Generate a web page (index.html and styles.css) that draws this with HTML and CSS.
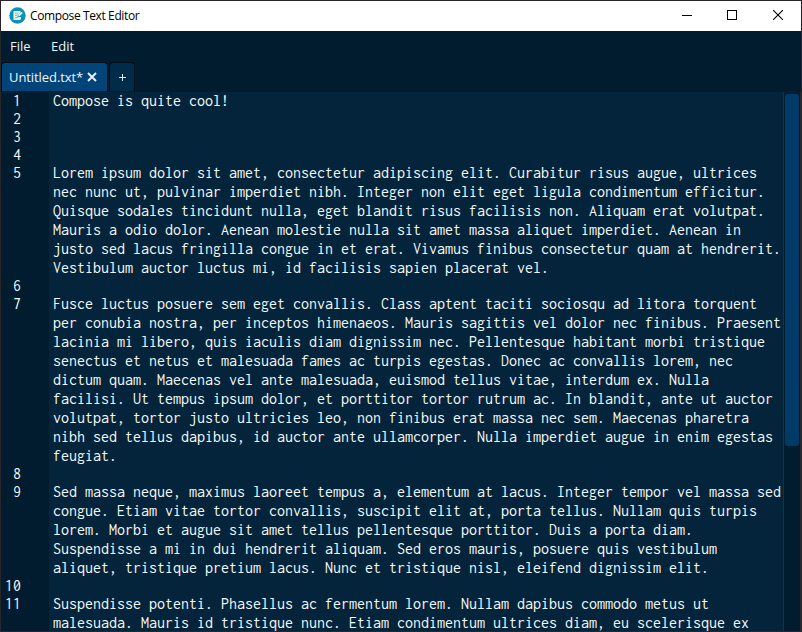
FILE: index.html
```html
<!DOCTYPE html>
<html lang="en">
<head>
<meta charset="utf-8">
<title>Compose Text Editor</title>
<link rel="stylesheet" href="styles.css">
</head>
<body>
<div class="window">
  <header class="titlebar">
    <svg class="logo" width="17" height="17" viewBox="0 0 17 17">
      <circle cx="8.5" cy="8.5" r="8.2" fill="#0991bd"/>
      <path d="M4.5 4h7v1.5L8.5 8.5V10H12v2l-1 1H4.5z" fill="#e9f7fb"/>
      <path d="M6 6.3h3M6 8.3h2M6 10.7h3.5" stroke="#0991bd" stroke-width=".6"/>
      <path d="M9.3 9.5l.3-1.7 3-3 1.2 1.2-3 3z" fill="#e9f7fb"/>
    </svg>
    <span class="title">Compose Text Editor</span>
    <div class="controls">
      <svg width="10" height="10"><path d="M0 5.5h10" stroke="#000"/></svg>
      <svg width="10" height="10"><rect x=".5" y=".5" width="9" height="9" fill="none" stroke="#000"/></svg>
      <svg width="10" height="10"><path d="M0 0l10 10M10 0L0 10" stroke="#000" stroke-width="1.1"/></svg>
    </div>
  </header>
  <nav class="menu"><span class="file">File</span><span class="edit">Edit</span></nav>
  <div class="tabs">
    <div class="tab active"><span class="name">Untitled.txt*</span>
      <svg width="10" height="10" viewBox="0 0 10 10"><path d="M1 1l8 8M9 1L1 9" stroke="#e8eff5" stroke-width="2"/></svg>
    </div>
    <div class="tab add"><svg width="7" height="7"><path d="M0 3.5h7M3.5 0v7" stroke="#dce5eb"/></svg></div>
  </div>
  <main class="editor">
    <div class="rows">
      <div class="row"><span class="num">1</span><pre>Compose is quite cool!</pre></div>
      <div class="row"><span class="num">2</span><pre></pre></div>
      <div class="row"><span class="num">3</span><pre></pre></div>
      <div class="row"><span class="num">4</span><pre></pre></div>
      <div class="row"><span class="num">5</span><pre>Lorem ipsum dolor sit amet, consectetur adipiscing elit. Curabitur risus augue, ultrices
nec nunc ut, pulvinar imperdiet nibh. Integer non elit eget ligula condimentum efficitur.
Quisque sodales tincidunt nulla, eget blandit risus facilisis non. Aliquam erat volutpat.
Mauris a odio dolor. Aenean molestie nulla sit amet massa aliquet imperdiet. Aenean in
justo sed lacus fringilla congue in et erat. Vivamus finibus consectetur quam at hendrerit.
Vestibulum auctor luctus mi, id facilisis sapien placerat vel.</pre></div>
      <div class="row"><span class="num">6</span><pre></pre></div>
      <div class="row"><span class="num">7</span><pre>Fusce luctus posuere sem eget convallis. Class aptent taciti sociosqu ad litora torquent
per conubia nostra, per inceptos himenaeos. Mauris sagittis vel dolor nec finibus. Praesent
lacinia mi libero, quis iaculis diam dignissim nec. Pellentesque habitant morbi tristique
senectus et netus et malesuada fames ac turpis egestas. Donec ac convallis lorem, nec
dictum quam. Maecenas vel ante malesuada, euismod tellus vitae, interdum ex. Nulla
facilisi. Ut tempus ipsum dolor, et porttitor tortor rutrum ac. In blandit, ante ut auctor
volutpat, tortor justo ultricies leo, non finibus erat massa nec sem. Maecenas pharetra
nibh sed tellus dapibus, id auctor ante ullamcorper. Nulla imperdiet augue in enim egestas
feugiat.</pre></div>
      <div class="row"><span class="num">8</span><pre></pre></div>
      <div class="row"><span class="num">9</span><pre>Sed massa neque, maximus laoreet tempus a, elementum at lacus. Integer tempor vel massa sed
congue. Etiam vitae tortor convallis, suscipit elit at, porta tellus. Nullam quis turpis
lorem. Morbi et augue sit amet tellus pellentesque porttitor. Duis a porta diam.
Suspendisse a mi in dui hendrerit aliquam. Sed eros mauris, posuere quis vestibulum
aliquet, tristique pretium lacus. Nunc et tristique nisl, eleifend dignissim elit.</pre></div>
      <div class="row"><span class="num">10</span><pre></pre></div>
      <div class="row"><span class="num">11</span><pre>Suspendisse potenti. Phasellus ac fermentum lorem. Nullam dapibus commodo metus ut
malesuada. Mauris id tristique nunc. Etiam condimentum ultrices diam, eu scelerisque ex</pre></div>
    </div>
    <div class="scroll"><div class="thumb"></div></div>
  </main>
</div>
</body>
</html>
```
FILE: styles.css
```css
* { box-sizing: border-box; }
body { margin: 0; overflow: hidden; }
.window {
  width: 802px;
  height: 632px;
  display: flex;
  flex-direction: column;
  border: 1px solid #28262b;
  background: #001c2e;
  font-family: "Open Sans", sans-serif;
  overflow: hidden;
}
.titlebar {
  height: 30px;
  flex: none;
  display: flex;
  align-items: center;
  padding: 0 18px 0 8px;
  background: #fff;
}
.logo { position: relative; top: -1px; }
.title { margin: -1px 0 0 4px; font-size: 12px; letter-spacing: -0.38px; color: #000; }
.controls { margin-left: auto; display: flex; gap: 35px; }
.controls svg { display: block; position: relative; top: -1px; }
.controls svg:last-child { margin-left: 1px; }
.menu {
  height: 31px;
  flex: none;
  display: flex;
  gap: 20.5px;
  padding-left: 9px;
  font-size: 13px;
  line-height: 31px;
  color: #f0f4f7;
}
.tabs { height: 30px; flex: none; display: flex; gap: 1px; padding-bottom: 1px; }
.tab {
  display: flex;
  align-items: center;
  border: 1px solid #000d16;
  border-bottom: 0;
  border-radius: 4px 4px 0 0;
}
.active {
  width: 107px;
  padding-left: 7px;
  gap: 4px;
  background: #004479;
  color: #f0f5f9;
  font-size: 13px;
}
.name { letter-spacing: -0.08px; }
.add { width: 26px; justify-content: center; background: #002c49; }
.editor { flex: 1; display: flex; min-height: 0; }
.rows {
  width: 783px;
  flex: none;
  overflow: hidden;
  background: linear-gradient(90deg, #001c2e 48px, #03243b 48px);
  border-right: 1px solid #232e38;
  font: 16px/19px "Inconsolata", "Liberation Mono", monospace;
  color: #f4f8f6;
}
.row { display: flex; margin-bottom: -1px; }
.row:first-child { margin-top: -1px; }
.num { width: 20px; text-align: right; flex: none; height: 19px; }
.row pre { margin: 0 0 0 32px; font: inherit; min-height: 19px; }
.scroll { flex: 1; padding: 2px 1px 0; border-right: 1px solid #28292c; }
.thumb { height: 352px; border-radius: 3px; background: #003a67; }
```
